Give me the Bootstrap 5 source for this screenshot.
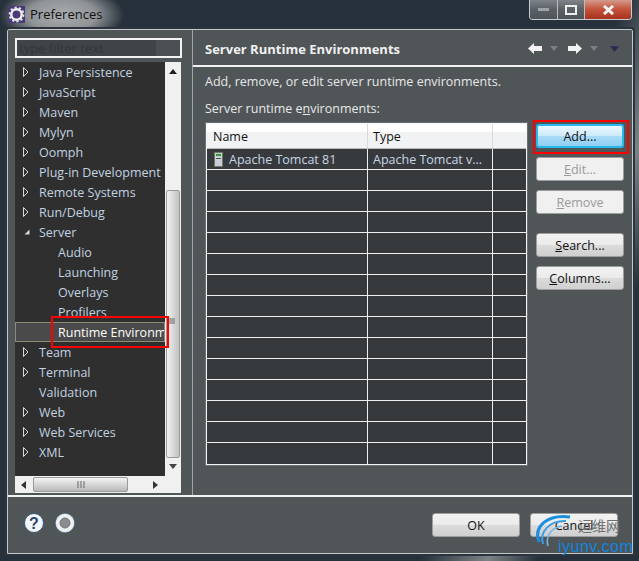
<!DOCTYPE html>
<html>
<head>
    <title>Preferences</title>
    <link href="https://cdn.jsdelivr.net/npm/bootstrap@5.3.0/dist/css/bootstrap.min.css" rel="stylesheet">
    <style>
        html, body { margin: 0; background: #1d2730; }
        body { font-family: "Open Sans", "Liberation Sans", sans-serif; font-size: 12.5px; }
        .win {
            width: 639px; height: 561px; position: relative; overflow: hidden;
            background:
                radial-gradient(ellipse 62px 30px at 62px 15px, #a9adb0 0%, #8f9396 55%, rgba(100,105,110,0) 100%),
                linear-gradient(110deg, rgba(0,0,0,0) 74%, #7d8286 82%, rgba(0,0,0,0) 88%),
                #27313b;
        }
        .cap { height: 29px; padding-left: 8px; }
        .cap-title { color: #111; font-size: 13px; margin-left: 5px; margin-top: 1px; }
        .cap-btns { width: 103px; height: 20px; margin-right: 7px; align-self: flex-start; border: 1px solid #c8cdd1; border-top: 0; border-radius: 0 0 4px 4px; overflow: hidden; }
        .cap-b { background: linear-gradient(#7d8388, #5a6064 50%, #4d5357); border-right: 1px solid #b9bec2; }
        .cap-min { width: 28px; }
        .cap-max { width: 27px; }
        .cap-close { flex: 1; border: 0; background: linear-gradient(#d59a8b, #c4523a 50%, #a8321e); }
        .frame { height: 525px; margin: 0 6px 0 7px; border: 1px solid #c3c7ca; border-radius: 2px 2px 0 0; background: #505558; outline: 2px solid #2b343c; }
        .mainrow { height: 465px; }
        .leftp { width: 185px; padding: 8px 10px 0 7px; border-right: 1px solid #a0a4a7; flex: none; }
        .filter { height: 20px; border: 2px solid #f2f2f2; background: linear-gradient(90deg, #3f4447 85%, #4b5053 85%); color: #33383a; padding-left: 2px; line-height: 16px; font-size: 13px; margin-bottom: 4px; }
        .treewrap { height: 431px; }
        .treebox { width: 150px; height: 414px; background: #2f2f2f; overflow: hidden; }
        .trow { height: 20px; line-height: 22px; color: #c2d2e0; white-space: nowrap; padding-left: 24px; position: relative; }
        .trow.kid { padding-left: 43px; }
        .trow.sel { background: #4a4a4a; outline: 1px solid #8c8a72; outline-offset: -1px; color: #fff; }
        .tarrow { position: absolute; left: 8px; top: 5px; }
        .vbar { width: 16px; height: 414px; background: #f0f0f0; position: relative; }
        .vthumb { position: absolute; left: 1px; width: 14px; top: 128px; height: 268px; border: 1px solid #9a9a9a; border-radius: 2px; background: linear-gradient(90deg, #f4f4f4, #d4d4d4 60%, #c2c2c2); }
        .hbar { width: 166px; height: 17px; background: #f0f0f0; position: relative; }
        .hthumb { position: absolute; left: 18px; top: 1px; width: 95px; height: 15px; border: 1px solid #9a9a9a; border-radius: 2px; background: linear-gradient(#f4f4f4, #d4d4d4 55%, #b9b9b9); }
        .sb-arrow { position: absolute; }
        .sb-up { left: 4px; top: 7px; }
        .sb-grip { left: -1px; top: 255px; }
        .sb-down { left: 4px; top: 402px; }
        .sb-left { left: 6px; top: 5px; }
        .sb-hgrip { left: 62px; top: 4px; }
        .sb-right { left: 138px; top: 5px; }
        .rightp { min-width: 0; flex: 1; }
        .rhead { height: 37px; padding: 2px 13px 0 12px; border-bottom: 2px solid #f2f2f2; }
        .rtitle { color: #f0f0f0; font-weight: 700; font-size: 13px; padding-top: 2px; }
        .nav-a { margin-left: 10px; }
        .nav-t { margin-left: 8px; }
        .nav-e { margin-left: 12px; }
        .rbody { padding: 5px 8px 0 13px; }
        .rdesc { color: #e8e8e8; height: 27px; line-height: 20px; margin: 0 0 0 -1px; }
        .rlabel { color: #e8e8e8; height: 17px; line-height: 19px; margin: 0 0 7px -1px; }
        .tbl { width: 321px; height: 342px; border: 1px solid #f4f4f4; outline: 1px solid #6b7073; background: #373a3d; }
        .thd { height: 25px; background: linear-gradient(#fff, #fff 30%, #f1f2f4 35%, #f1f2f4); border-bottom: 1px solid #bbb; color: #111; line-height: 26px; }
        .trw { height: 21px; line-height: 19px; color: #c8d6e2; border-bottom: 1px solid #f0f0f0; }
        .trw:last-child { border-bottom: 0; }
        .trw .c1, .trw .c2 { padding-top: 1px; }
        .c1 { width: 161px; padding-left: 6px; border-right: 1px solid #f0f0f0; flex: none; white-space: nowrap; overflow: hidden; }
        .c2 { width: 125px; padding-left: 5px; border-right: 1px solid #f0f0f0; flex: none; white-space: nowrap; overflow: hidden; }
        .thd .c1, .thd .c2 { border-right-color: #d9d9d9; }
        .srv-ico { margin: 0 6px 0 1px; vertical-align: -3px; }
        .sidebtns { width: 88px; padding-top: 1px; margin-left: 9px; }
        .wbtn { display: block; width: 88px; height: 24px; padding: 2px 0 0; font-size: 12.5px; line-height: 20px; color: #111; text-align: center; border: 1px solid #9e9e9e; border-radius: 3px; background: linear-gradient(#f2f2f2, #ebebeb 48%, #dcdcdc 50%, #cfcfcf); }
        .wbtn.dim { color: #9a9a9a; background: #f0f0f0; }
        .wbtn.hot { padding: 0; border: 2px solid #27b8ec; background: linear-gradient(#ecf8fe, #cdeafa 48%, #a9dbf6 50%, #8fd0f3); line-height: 19px; }
        .sp-9 { margin-top: 9px; }
        .sp-19 { margin-top: 19px; }
        .foot { height: 58px; border-top: 2px solid #f2f2f2; padding: 16px 14px 0 16px; }
        .foot-ico2 { margin-left: 8px; }
        .foot-gap { margin-left: 10px; }
        .redbox { position: absolute; border: 2px solid #f00; pointer-events: none; }
        .rb1 { left: 533px; top: 120px; width: 96px; height: 34px; }
        .rb2 { left: 51px; top: 316px; width: 118px; height: 32px; }
        .mark-wrap { position: absolute; left: 530px; top: 508px; width: 109px; height: 53px; pointer-events: none; }
        .wm-cn { position: absolute; left: 48px; top: 7px; font: 400 14px/20px "Noto Sans CJK SC", sans-serif; color: #6c7073; }
        .wm-en { position: absolute; left: 28px; top: 30px; font: 400 16px/18px "Liberation Sans", sans-serif; color: #0d86e0; letter-spacing: .5px; }
        .wm-svg { position: absolute; left: 0; top: 0; }
    </style>
</head>
<body>
<div class="win">
    <div class="cap d-flex align-items-center">
        <svg width="17" height="17" viewBox="0 0 17 17">
            <rect width="17" height="17" fill="#4a3a78"/>
            <circle cx="8.5" cy="8.5" r="5.2" fill="none" stroke="#f0f0f0" stroke-width="2.4"/>
            <circle cx="8.5" cy="8.5" r="7" fill="none" stroke="#e8e8e8" stroke-width="1.8" stroke-dasharray="2.2 2.2"/>
        </svg>
        <span class="cap-title">Preferences</span>
        <div class="cap-btns ms-auto d-flex">
            <div class="cap-b cap-min d-flex align-items-center justify-content-center">
                <svg width="12" height="5"><rect y="1" width="11" height="3" fill="#9ea3a6"/></svg>
            </div>
            <div class="cap-b cap-max d-flex align-items-center justify-content-center">
                <svg width="12" height="10"><rect x="1" y="1" width="10" height="8" fill="none" stroke="#eee" stroke-width="2"/></svg>
            </div>
            <div class="cap-b cap-close d-flex align-items-center justify-content-center">
                <svg width="13" height="10"><path d="M2 1 L11 9 M11 1 L2 9" stroke="#f4f4f4" stroke-width="3"/></svg>
            </div>
        </div>
    </div>

    <div class="frame">
        <div class="mainrow d-flex">
            <div class="leftp">
                <div class="filter">type filter text</div>
                <div class="treewrap">
                    <div class="d-flex">
                        <div class="treebox" id="tree"></div>
                        <div class="vbar">
                            <svg class="sb-arrow sb-up" width="8" height="5"><path d="M0 5 L4 0 L8 5Z" fill="#222"/></svg>
                            <div class="vthumb"></div>
                            <svg class="sb-arrow sb-grip" width="16" height="9"><path d="M3 2H11M3 4H11M3 6H11" stroke="#666"/></svg>
                            <svg class="sb-arrow sb-down" width="8" height="5"><path d="M0 0 L4 5 L8 0Z" fill="#444"/></svg>
                        </div>
                    </div>
                    <div class="hbar">
                        <svg class="sb-arrow sb-left" width="5" height="8"><path d="M5 0 L0 4 L5 8Z" fill="#333"/></svg>
                        <div class="hthumb"></div>
                        <svg class="sb-arrow sb-hgrip" width="9" height="9"><path d="M1 1V8M4 1V8M7 1V8" stroke="#666"/></svg>
                        <svg class="sb-arrow sb-right" width="5" height="8"><path d="M0 0 L5 4 L0 8Z" fill="#333"/></svg>
                    </div>
                </div>
            </div>
            <div class="rightp">
                <div class="rhead d-flex align-items-center">
                    <span class="rtitle">Server Runtime Environments</span>
                    <div class="ms-auto d-flex align-items-center">
                        <svg width="14" height="11" viewBox="0 0 14 11"><path d="M0 5.5 L6 0 V3 H14 V8 H6 V11Z" fill="#f2f2f2"/></svg>
                        <svg class="nav-t" width="8" height="5"><path d="M0 0H8L4 5Z" fill="#7b7f82"/></svg>
                        <svg class="nav-a" width="14" height="11" viewBox="0 0 14 11"><path d="M14 5.5 L8 0 V3 H0 V8 H8 V11Z" fill="#f2f2f2"/></svg>
                        <svg class="nav-t" width="8" height="5"><path d="M0 0H8L4 5Z" fill="#7b7f82"/></svg>
                        <svg class="nav-e" width="9" height="6"><path d="M0.5 0.5H8.5L4.5 5.5Z" fill="#2b2b33" stroke="#3a2a70"/></svg>
                    </div>
                </div>
                <div class="rbody">
                    <p class="rdesc">Add, remove, or edit server runtime environments.</p>
                    <p class="rlabel">Server runtime e<u>n</u>vironments:</p>
                    <div class="d-flex">
                        <div class="tbl" id="tbl"></div>
                        <div class="sidebtns d-flex flex-column">
                            <button class="wbtn hot">Add...</button>
                            <button class="wbtn dim sp-9"><u>E</u>dit...</button>
                            <button class="wbtn dim sp-9"><u>R</u>emove</button>
                            <button class="wbtn sp-19"><u>S</u>earch...</button>
                            <button class="wbtn sp-9"><u>C</u>olumns...</button>
                        </div>
                    </div>
                </div>
            </div>
        </div>
        <div class="foot d-flex align-items-start">
            <svg width="22" height="22" viewBox="0 0 22 22">
                <circle cx="10" cy="10" r="9.5" fill="#f4f6f8" stroke="#3c5a80"/>
                <text x="10" y="16" text-anchor="middle" font-family="Liberation Sans" font-weight="700" font-size="16" fill="#2a4670">?</text>
            </svg>
            <svg class="foot-ico2" width="22" height="22" viewBox="0 0 22 22">
                <circle cx="11" cy="10" r="9.5" fill="#eef0f2" stroke="#5a7aa0" stroke-dasharray="2 1"/>
                <circle cx="11" cy="10" r="5" fill="#8a8d90" stroke="#777"/>
            </svg>
            <button class="wbtn ms-auto">OK</button>
            <button class="wbtn foot-gap">Cancel</button>
        </div>
    </div>

    <div class="redbox rb1"></div>
    <div class="redbox rb2"></div>

    <div class="mark-wrap">
        <svg class="wm-svg" width="60" height="53" viewBox="0 0 60 53">
            <path d="M9 34 C3 18 18 6 40 9" fill="none" stroke="#1a8fe0" stroke-width="3"/>
            <path d="M13 36 C9 24 20 12 36 13" fill="none" stroke="#3aa0e6" stroke-width="2"/>
            <path d="M18 38 C15 28 22 19 32 18" fill="none" stroke="#6bb8ec" stroke-width="1.5"/>
        </svg>
        <span class="wm-cn">运维网</span>
        <span class="wm-en">iyunv.com</span>
    </div>
</div>

<script>
    const treeItems = [
        ['Java Persistence', 1], ['JavaScript', 1], ['Maven', 1], ['Mylyn', 1], ['Oomph', 1],
        ['Plug-in Development', 1], ['Remote Systems', 1], ['Run/Debug', 1], ['Server', 2],
        ['Audio', 0, 1], ['Launching', 0, 1], ['Overlays', 0, 1], ['Profilers', 0, 1],
        ['Runtime Environments', 0, 2], ['Team', 1], ['Terminal', 1], ['Validation', 0], ['Web', 1],
        ['Web Services', 1], ['XML', 1]
    ];
    const arrowRight = '<svg class="tarrow" width="6" height="10"><path d="M0.5 0.5 L5 5 L0.5 9.5Z" fill="none" stroke="#d8d8d8"/></svg>';
    const arrowDown = '<svg class="tarrow" width="7" height="10"><path d="M6.5 2.5 V7.5 H1.5Z" fill="#d8d8d8"/></svg>';
    document.getElementById('tree').innerHTML = treeItems.map(([name, arrow, kid]) => {
        const cls = 'trow' + (kid ? ' kid' : '') + (kid === 2 ? ' sel' : '');
        const icon = arrow === 1 ? arrowRight : arrow === 2 ? arrowDown : '';
        return `<div class="${cls}">${icon}${name}</div>`;
    }).join('');

    const tomcatIcon = '<svg class="srv-ico" width="9" height="15" viewBox="0 0 9 15"><rect x=".5" y=".5" width="8" height="14" fill="#c9cfd8" stroke="#6b7a5a"/><rect x="2" y="2" width="5" height="2" fill="#2c9a2c"/><rect x="2" y="6" width="5" height="1" fill="#555"/></svg>';
    let rows = '<div class="thd d-flex"><div class="c1">Name</div><div class="c2">Type</div></div>';
    for (let i = 0; i < 15; i++) {
        const a = i === 0 ? tomcatIcon + 'Apache Tomcat 81' : '&nbsp;';
        const b = i === 0 ? 'Apache Tomcat v...' : '&nbsp;';
        rows += `<div class="trw d-flex"><div class="c1">${a}</div><div class="c2">${b}</div></div>`;
    }
    document.getElementById('tbl').innerHTML = rows;
</script>
<script src="https://cdn.jsdelivr.net/npm/bootstrap@5.3.0/dist/js/bootstrap.bundle.min.js"></script>
</body>
</html>
